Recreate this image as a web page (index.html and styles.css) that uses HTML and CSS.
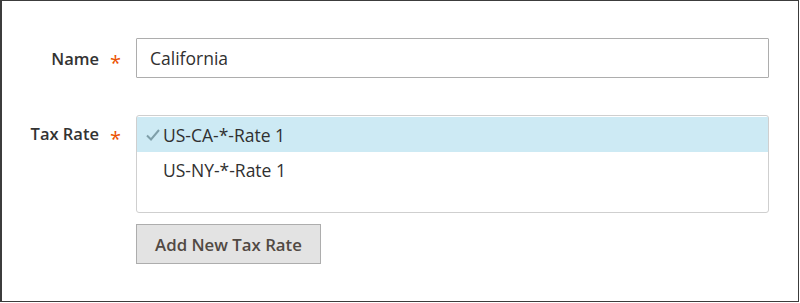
FILE: index.html
```html
<!DOCTYPE html>
<html lang="en">
<head>
<meta charset="utf-8">
<title>Tax Rule</title>
<link rel="stylesheet" href="styles.css">
</head>
<body>
<div class="frame">
  <div class="field field-name">
    <label class="label" for="name"><span class="label-text">Name</span><span class="req">*</span></label>
    <div class="control">
      <input id="name" class="input" type="text" value="California">
    </div>
  </div>
  <div class="field field-rate">
    <div class="label"><span class="label-text">Tax Rate</span><span class="req">*</span></div>
    <div class="control">
      <div class="multiselect" role="listbox">
        <div class="option selected" role="option">
          <svg class="check" width="14" height="12" viewBox="0 0 14 12"><path d="M1 6.5 L5 10.5 L13 1" fill="none" stroke="#7f9fa9" stroke-width="2"/></svg>
          <span>US-CA-*-Rate 1</span>
        </div>
        <div class="option" role="option"><span>US-NY-*-Rate 1</span></div>
      </div>
      <button class="btn" type="button">Add New Tax Rate</button>
    </div>
  </div>
</div>
</body>
</html>
```

FILE: styles.css
```css
* { box-sizing: border-box; }
html, body { margin: 0; padding: 0; background: #fff; }
body { font-family: "Open Sans", "Liberation Sans", sans-serif; color: #303030; }

.frame {
  width: 799px;
  height: 302px;
  border: 1px solid #3c3c3c;
  border-left-width: 2px;
  padding-top: 37px;
  display: flex;
  flex-direction: column;
  gap: 37px;
}

.field { display: flex; }
.field-name { align-items: center; }

.label {
  width: 134px;
  flex: none;
  display: flex;
  justify-content: flex-end;
  align-items: center;
  padding-right: 15px;
  font-size: 16.5px;
  font-weight: 600;
  color: #333;
}
.field-rate .label { height: 37px; align-self: flex-start; }

.req {
  color: #eb5202;
  font-weight: 400;
  font-size: 20px;
  line-height: 1;
  margin-left: 11px;
  margin-top: 10px;
}

.control { width: 633px; display: flex; flex-direction: column; gap: 11px; }

.input {
  width: 633px;
  height: 40px;
  border: 1px solid #adadad;
  border-radius: 1px;
  padding: 0 13px;
  font-family: inherit;
  font-size: 17.5px;
  color: #303030;
  outline: none;
  background: #fff;
}

.multiselect {
  height: 98px;
  border: 1px solid #cfcfcf;
  border-radius: 3px;
  padding: 1px 0;
  background: #fff;
}
.option {
  height: 35px;
  display: flex;
  align-items: center;
  padding-left: 26px;
  font-size: 17.5px;
  color: #303030;
}
.option.selected {
  background: #cdeaf4;
  padding-left: 9px;
}
.check { margin-right: 3px; margin-top: 1px; }

.btn {
  align-self: flex-start;
  width: 185px;
  height: 40px;
  background: #e3e3e3;
  border: 1px solid #adadad;
  border-radius: 0;
  font-family: inherit;
  font-size: 16.8px;
  font-weight: 600;
  color: #514943;
  padding: 0;
}
```
